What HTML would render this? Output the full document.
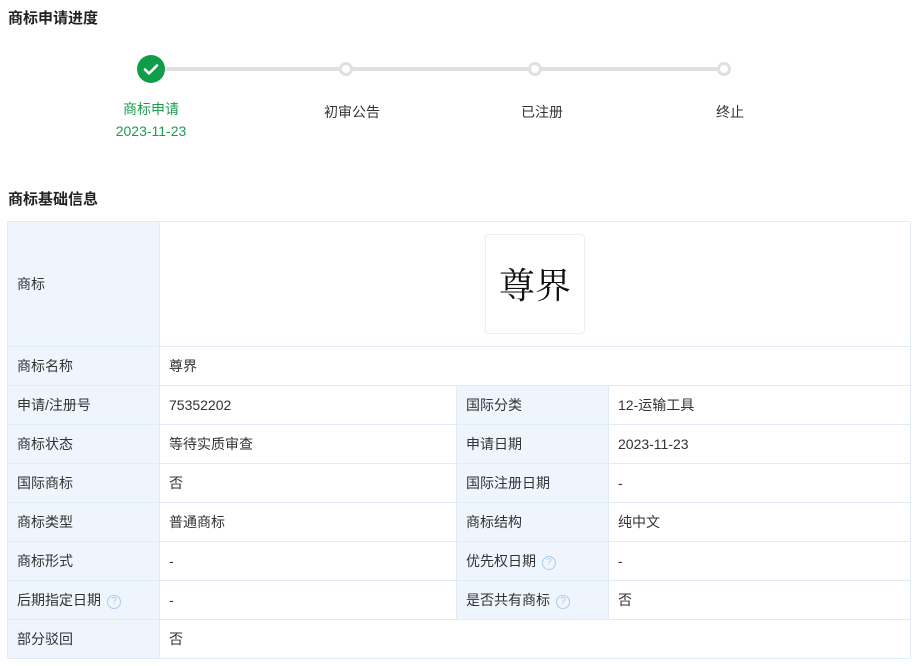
<!DOCTYPE html>
<html><head><meta charset="utf-8"><style>
body{margin:0;width:917px;height:666px;background:#fff;font-family:"Liberation Sans","Noto Sans CJK SC",sans-serif;color:#333;position:relative;overflow:hidden}
.h{position:absolute;left:8px;font-size:15px;font-weight:bold;color:#222}
.ab{position:absolute}
.lbl{position:absolute;font-size:14px;transform:translateX(-50%);white-space:nowrap;text-align:center;line-height:22px}
table{position:absolute;left:7px;top:221px;border-collapse:collapse;width:904px;font-size:14px;table-layout:fixed}
td{border:1px solid #e1ebf5;padding:0 0 0 9px;height:38px;color:#333}
td.k{background:#eef5fc}
.q{display:inline-block;width:12px;height:12px;border:1px solid #a9cdee;border-radius:50%;color:#a9cdee;font-size:10px;line-height:12px;text-align:center;vertical-align:1px;margin-left:6px}
</style></head><body>
<div class="h" style="top:7px">商标申请进度</div>
<div class="ab" style="left:151px;top:67px;width:573px;height:4px;background:#e0e0e0"></div>
<div class="ab" style="left:137px;top:55px;width:28px;height:28px;border-radius:50%;background:#0f9d4a">
<svg width="28" height="28"><path d="M8 14.5l4 4 8-8" stroke="#fff" stroke-width="2.6" fill="none" stroke-linecap="round" stroke-linejoin="round"/></svg></div>
<div class="ab" style="left:339px;top:62px;width:8px;height:8px;border:3px solid #e0e0e0;border-radius:50%;background:#fff"></div>
<div class="ab" style="left:528px;top:62px;width:8px;height:8px;border:3px solid #e0e0e0;border-radius:50%;background:#fff"></div>
<div class="ab" style="left:717px;top:62px;width:8px;height:8px;border:3px solid #e0e0e0;border-radius:50%;background:#fff"></div>
<div class="lbl" style="left:151px;top:98px;color:#1a9d4c">商标申请<br>2023-11-23</div>
<div class="lbl" style="left:352px;top:101px">初审公告</div>
<div class="lbl" style="left:542px;top:101px">已注册</div>
<div class="lbl" style="left:730px;top:101px">终止</div>
<div class="h" style="top:188px">商标基础信息</div>
<table>
<colgroup><col style="width:152px"><col style="width:297px"><col style="width:152px"><col></colgroup>
<tr><td class="k" style="height:124px">商标</td><td colspan="3" style="position:relative"><div class="ab" style="left:325px;top:12px;width:98px;height:98px;border:1px solid #eee;border-radius:4px;font-family:'Noto Serif CJK SC',serif;font-size:36px;line-height:98px;text-align:center;color:#111">尊界</div></td></tr>
<tr><td class="k">商标名称</td><td colspan="3">尊界</td></tr>
<tr><td class="k">申请/注册号</td><td>75352202</td><td class="k">国际分类</td><td>12-运输工具</td></tr>
<tr><td class="k">商标状态</td><td>等待实质审查</td><td class="k">申请日期</td><td>2023-11-23</td></tr>
<tr><td class="k">国际商标</td><td>否</td><td class="k">国际注册日期</td><td>-</td></tr>
<tr><td class="k">商标类型</td><td>普通商标</td><td class="k">商标结构</td><td>纯中文</td></tr>
<tr><td class="k">商标形式</td><td>-</td><td class="k">优先权日期<span class="q">?</span></td><td>-</td></tr>
<tr><td class="k">后期指定日期<span class="q">?</span></td><td>-</td><td class="k">是否共有商标<span class="q">?</span></td><td>否</td></tr>
<tr><td class="k">部分驳回</td><td colspan="3">否</td></tr>
</table>
</body></html>
